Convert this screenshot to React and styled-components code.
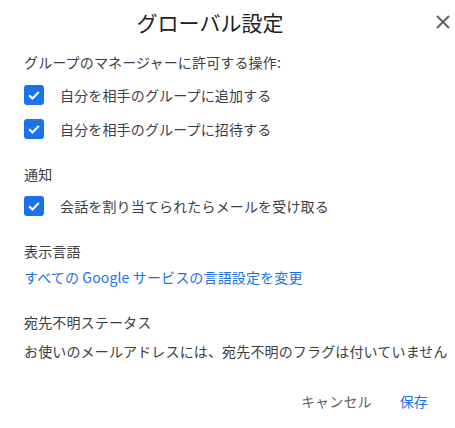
import React from "react";
import styled, { createGlobalStyle } from "styled-components";

const Global = createGlobalStyle`
  html, body { margin: 0; padding: 0; background: #fff; }
  body { font-family: "Noto Sans CJK JP", "Noto Sans", Roboto, sans-serif; }
`;

const Dialog = styled.div`
  width: 455px;
  height: 428px;
  box-sizing: border-box;
  background: #fff;
  display: flex;
  flex-direction: column;
`;

const Header = styled.div`
  display: flex;
  align-items: center;
  padding: 8px 2px 0 24px;
  height: 28px;
`;

const Title = styled.h1`
  flex: 1;
  margin: 0;
  padding-right: 37px;
  text-align: center;
  font-size: 21px;
  font-weight: 400;
  line-height: 28px;
  color: #202124;
`;

const CloseButton = styled.button`
  width: 20px;
  height: 20px;
  padding: 0;
  border: none;
  background: none;
  display: flex;
  align-items: center;
  justify-content: center;
  cursor: pointer;
`;

const Body = styled.div`
  padding: 16px 24px 0;
  display: flex;
  flex-direction: column;
  letter-spacing: 0.15px;
`;

const Section = styled.section`
  display: flex;
  flex-direction: column;
  gap: ${(p) => p.$gap}px;
  margin-top: ${(p) => p.$top}px;
`;

const Heading = styled.div`
  font-size: 14px;
  line-height: 20px;
  color: #3c4043;
`;

const Rows = styled.div`
  display: flex;
  flex-direction: column;
  gap: 14px;
`;

const Row = styled.label`
  display: flex;
  align-items: center;
  gap: 16px;
  font-size: 14px;
  line-height: 20px;
  color: #3c4043;
`;

const Box = styled.span`
  width: 20px;
  height: 20px;
  border-radius: 3px;
  background: #1a73e8;
  display: flex;
  align-items: center;
  justify-content: center;
  flex-shrink: 0;
`;

const Link = styled.a`
  font-size: 14px;
  line-height: 20px;
  color: #1a73e8;
  text-decoration: none;
`;

const Text = styled.div`
  font-size: 14px;
  line-height: 20px;
  color: #3c4043;
  white-space: nowrap;
`;

const Footer = styled.div`
  display: flex;
  justify-content: flex-end;
  gap: 12px;
  padding: 22px 19px 0 0;
`;

const Button = styled.button`
  height: 36px;
  padding: 0 8px;
  border: none;
  background: none;
  font-family: inherit;
  font-size: 14px;
  letter-spacing: 0.15px;
  color: ${(p) => (p.$primary ? "#1a73e8" : "#5f6368")};
  cursor: pointer;
`;

const Checkbox = () => (
  <Box>
    <svg width="14" height="14" viewBox="0 0 14 14">
      <polyline
        points="2.2,7.3 5.4,10.4 11.8,3.9"
        fill="none"
        stroke="#fff"
        strokeWidth="2.1"
      />
    </svg>
  </Box>
);

export default function App() {
  return (
    <>
      <Global />
      <Dialog>
        <Header>
          <Title>グローバル設定</Title>
          <CloseButton aria-label="閉じる">
            <svg width="14" height="14" viewBox="0 0 14 14">
              <path d="M1 1 L13 13 M13 1 L1 13" stroke="#5f6368" strokeWidth="2" />
            </svg>
          </CloseButton>
        </Header>
        <Body>
          <Section $gap={13} $top={0}>
            <Heading>グループのマネージャーに許可する操作:</Heading>
            <Rows>
              <Row>
                <Checkbox />
                自分を相手のグループに追加する
              </Row>
              <Row>
                <Checkbox />
                自分を相手のグループに招待する
              </Row>
            </Rows>
          </Section>
          <Section $gap={12} $top={25}>
            <Heading>通知</Heading>
            <Row>
              <Checkbox />
              会話を割り当てられたらメールを受け取る
            </Row>
          </Section>
          <Section $gap={6} $top={25}>
            <Heading>表示言語</Heading>
            <Link href="#">すべての Google サービスの言語設定を変更</Link>
          </Section>
          <Section $gap={9} $top={25}>
            <Heading>宛先不明ステータス</Heading>
            <Text>お使いのメールアドレスには、宛先不明のフラグは付いていません</Text>
          </Section>
        </Body>
        <Footer>
          <Button>キャンセル</Button>
          <Button $primary>保存</Button>
        </Footer>
      </Dialog>
    </>
  );
}
